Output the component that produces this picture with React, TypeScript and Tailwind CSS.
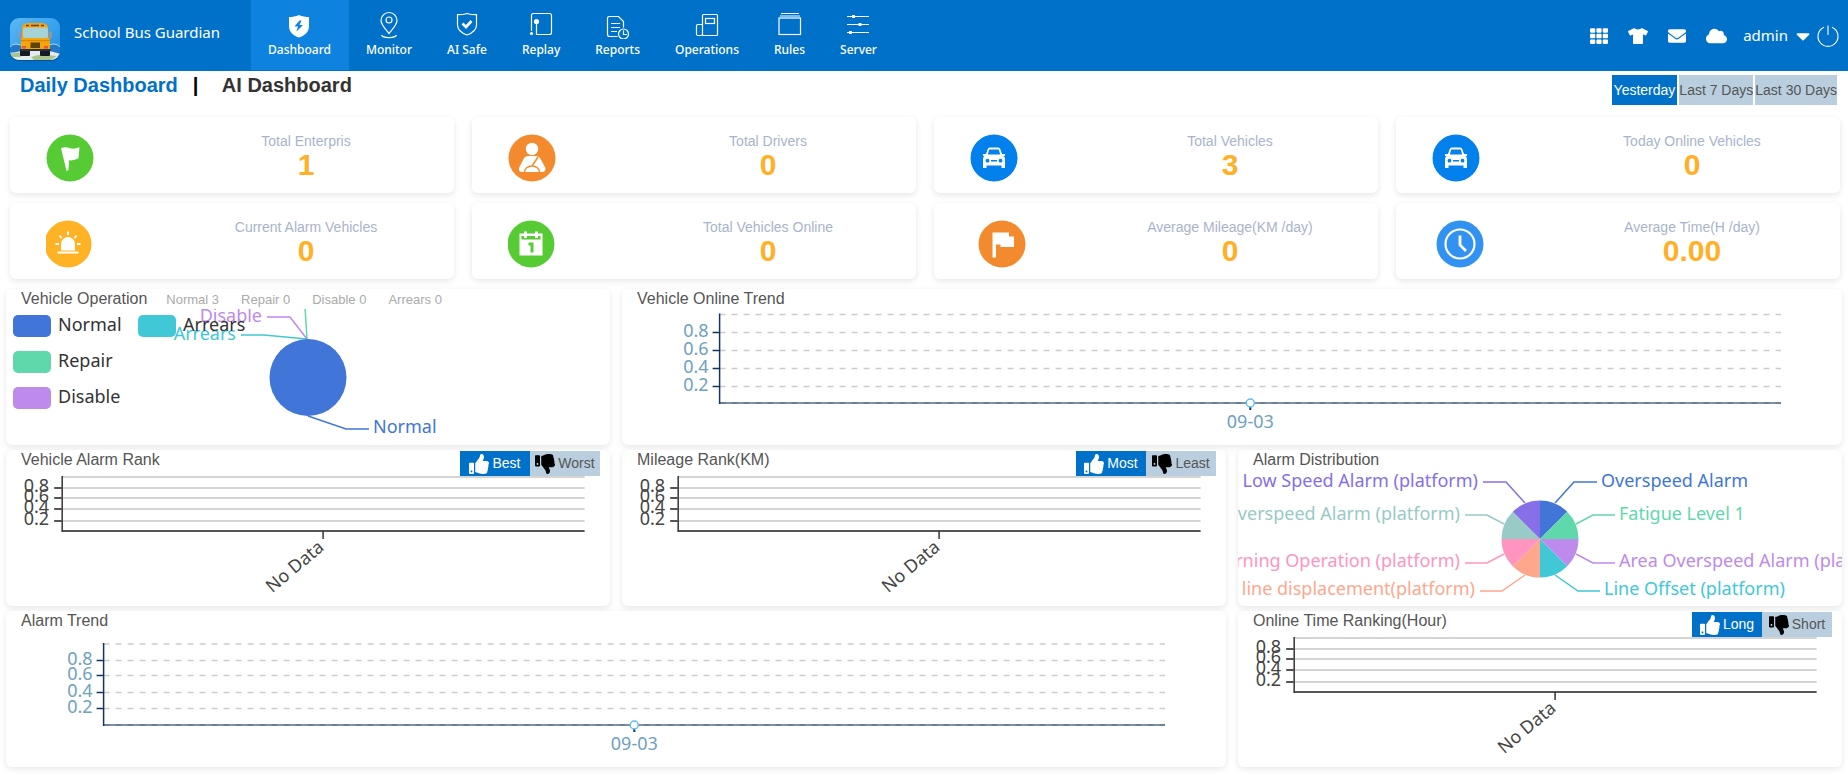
import { useState } from 'react';
import type { ReactNode } from 'react';
import { FaCaretDown, FaCloud, FaEnvelope, FaTh, FaThumbsDown, FaThumbsUp, FaTshirt } from 'react-icons/fa';

const COLORS = ['#4176d8', '#5fd8ac', '#be8aeb', '#40c8d7', '#ffa78d', '#ff94c1', '#98cac6', '#866fe8'];

const CHART_FONT = "font-['Noto_Sans','Noto_Sans_CJK_SC',sans-serif] text-[18px]";

/* ---------- Nav ---------- */

const NAV_ITEMS: { label: string; icon: ReactNode }[] = [
  {
    label: 'Dashboard',
    icon: (
      <>
        <path d="M14 4c3 1.600 7 2 10 2v9c0 6-4 9.500-10 11.500C8 24.500 4 21 4 15V6c3 0 7-.4 10-2z" fill="#fff" stroke="none" />
        <path d="M14.500 9.500l-5 6h3.500l-1.500 5 6.500-6.500h-3.500l2-4.500z" fill="#0d82df" stroke="none" />
      </>
    ),
  },
  {
    label: 'Monitor',
    icon: (
      <>
        <path d="M14 22.500C9.500 17 6 13.500 6 9.500a8 8 0 0 1 16 0c0 4-3.500 7.500-8 13z" />
        <circle cx="14" cy="9" r="3" />
        <path d="M6.500 24c1 3.400 14 3.400 15 0" />
      </>
    ),
  },
  {
    label: 'AI Safe',
    icon: (
      <>
        <path d="M14 2.500c3 1 6.500 1.200 9.500 1.200V14c0 5-4 8-9.500 10C8.500 22 4.500 19 4.500 14V3.700c3 0 6.500-.2 9.500-1.200z" />
        <path d="M9.500 12.500l3.500 3.500 5.500-6" strokeWidth="2.600" />
      </>
    ),
  },
  {
    label: 'Replay',
    icon: (
      <>
        <path d="M4.500 20V4.500q0-2 2-2h16q2 0 2 2v17q0 2-2 2h-13V11" />
        <circle cx="9.500" cy="10.500" r="2.600" fill="#fff" stroke="none" />
        <circle cx="4.500" cy="22.500" r="1.600" fill="#fff" stroke="none" />
      </>
    ),
  },
  {
    label: 'Reports',
    icon: (
      <>
        <path d="M13.500 25.500h-8q-2 0-2-2v-16q0-2 2-2h9l5 5v6" />
        <path d="M7 12.500h9M7 16.500h9M7 20.500h6" />
        <circle cx="19.500" cy="23" r="5" />
        <path d="M19.500 19.500V23.500H23" />
      </>
    ),
  },
  {
    label: 'Operations',
    icon: (
      <>
        <rect x="9.500" y="3.500" width="15" height="21" rx="1" />
        <path d="M9.500 13.500H5q-1.500 0-1.500 1.500v8q0 1.500 1.500 1.500H8q1.500 0 1.500-1.500" />
        <rect x="12.500" y="7.500" width="9" height="5" />
      </>
    ),
  },
  {
    label: 'Rules',
    icon: (
      <>
        <path d="M5 2.500h18M4 5h20" />
        <rect x="3" y="7" width="21.500" height="16.500" />
      </>
    ),
  },
  {
    label: 'Server',
    icon: (
      <>
        <path d="M3 5.500h22M3 13.500h22M3 21.500h22" />
        <path d="M8 5.500h3M14.500 13.500h3M5 21.500h3" strokeWidth="3" />
      </>
    ),
  },
];

function BusLogo() {
  return (
    <svg className="h-[44px] w-[52px] shrink-0" viewBox="0 0 52 44">
      <defs>
        <linearGradient id="sky" x1="0" y1="0" x2="1" y2="1">
          <stop offset="0" stopColor="#5db8f2" />
          <stop offset="0.5" stopColor="#3aa3ee" />
          <stop offset="1" stopColor="#1f86dc" />
        </linearGradient>
        <clipPath id="tile">
          <rect x="1" y="0" width="50" height="42" rx="9" />
        </clipPath>
      </defs>
      <rect x="1" y="1" width="50" height="42" rx="9" fill="#0a4f8f" />
      <g clipPath="url(#tile)">
        <rect width="52" height="44" fill="url(#sky)" />
        <path d="M0 30q3-4 7-4t8 3v6H0zM37 29q4-3 8-3t7 4v6H37z" fill="#2377c6" stroke="#a9d6f7" />
        <ellipse cx="26" cy="41" rx="30" ry="9" fill="#e3ecef" />
        <path d="M2 36q8-3 14 0l-5 3H1zM22 39q8-3 16-2l10 1-8 5H26z" fill="#a9c48c" />
      </g>
      <rect x="10" y="13" width="4" height="8" rx="2" fill="#8c98a3" />
      <rect x="39" y="13" width="4" height="8" rx="2" fill="#8c98a3" />
      <rect x="11" y="31" width="10" height="7" rx="1" fill="#151b26" />
      <rect x="31" y="31" width="10" height="7" rx="1" fill="#151b26" />
      <path d="M13 10q0-4 5-5h16q5 1 5 5v9l2 3v9H12v-9l1-3z" fill="#f5a50c" />
      <path d="M17 7.500h3M22 7.500h8M32 7.500h3" stroke="#7b3a10" strokeWidth="1.500" />
      <rect x="14" y="9.500" width="25" height="10.500" rx="2" fill="#a5d3d6" />
      <path d="M12 22h29v1.200H12z" fill="#d98503" />
      <rect x="21.500" y="24.500" width="9.500" height="5.500" fill="#5c4308" />
      <rect x="13" y="28" width="4" height="2.500" fill="#e9572b" />
      <rect x="35" y="28" width="4" height="2.500" fill="#e9572b" />
      <rect x="11" y="31" width="31" height="2" rx="1" fill="#2c3240" />
    </svg>
  );
}

function Header() {
  return (
    <header className="flex h-[71px] items-start bg-[#0071c9] pr-2 pl-[9px] font-['Noto_Sans','Open_Sans',sans-serif] text-white">
      <div className="flex w-[242px] shrink-0 items-start pt-[18px]">
        <BusLogo />
        <span className="pl-[13px] text-[15px] leading-7 whitespace-nowrap">School Bus Guardian</span>
      </div>

      <nav className="flex">
        {NAV_ITEMS.map((item, i) => (
          <a
            key={item.label}
            href="#"
            className={`flex h-[70px] flex-col items-center pt-[11px] pr-[18px] pl-[17px] ${i === 0 ? 'bg-[#0d82df]' : ''}`}
          >
            <svg
              className="h-7 w-7"
              viewBox="0 0 28 28"
              fill="none"
              stroke="#fff"
              strokeWidth="1.200"
            >
              {item.icon}
            </svg>
            <span className="text-[12px] leading-[22px] font-medium whitespace-nowrap">{item.label}</span>
          </a>
        ))}
      </nav>

      <div className="ml-auto flex h-[71px] items-center">
        <div className="flex items-center gap-5">
          <button aria-label="Apps"><FaTh className="h-5 w-[18px]" /></button>
          <button aria-label="Theme"><FaTshirt className="h-5 w-5" /></button>
          <button aria-label="Messages"><FaEnvelope className="h-[18px] w-[18px]" /></button>
          <button aria-label="Cloud"><FaCloud className="h-5 w-[21px]" /></button>
        </div>
        <button className="ml-4 flex items-center gap-[6px] text-[15px]">
          admin
          <FaCaretDown className="h-[22px] w-[18px]" />
        </button>
        <button aria-label="Log out" className="ml-1">
          <svg className="h-6 w-6" viewBox="0 0 24 24" fill="none" stroke="#fff" strokeWidth="1.100">
            <path d="M8 3.200a10 10 0 1 0 8 0M12 1.500v9.500" />
          </svg>
        </button>
      </div>
    </header>
  );
}

/* ---------- Stat cards ---------- */

const CAR = (
  <path
    fill="#fff"
    fillRule="evenodd"
    d="M-6.500-8.500q.5-2 2.500-2h8q2 0 2.500 2l1.500 4.500h3v2H9.500q1.500 1 1.500 3V10H7.500V7.500h-15V10H-11V1q0-2 1.500-3h-1.500v-2h3zM-4.700-8.500L-6.200-3.500H6.200L4.700-8.500zM-6.500.800a1.900 1.900 0 1 0 0 3.800 1.900 1.900 0 0 0 0-3.800zM6.500.800a1.900 1.900 0 1 0 0 3.800 1.900 1.900 0 0 0 0-3.800zM-3 2v1.500h6V2z"
  />
);

interface Stat {
  label: string;
  value: string;
  color: string;
  cx: number;
  glyph: ReactNode;
}

const STATS: Stat[] = [
  {
    label: 'Total Enterpris',
    value: '1',
    color: '#57cb33',
    cx: 24,
    glyph: <path fill="#fff" d="M-9-10q5-1.500 9 .3 4 1.300 9.500-1l-1 11q-4 2.500-9.500 2L-1.500 12-3.500 13z" />,
  },
  {
    label: 'Total Drivers',
    value: '0',
    color: '#f38b2e',
    cx: 24,
    glyph: (
      <>
        <circle cy="-9" r="6.200" fill="#fff" />
        <path d="M-8 0q2-2 4-2h8q2 0 4 2l5.500 10q0 4-3 4H-10q-3.500 0-3-4z" fill="#fff" />
        <path d="M-7.500 14a7.500 6 0 0 1 15 0M0 8l6-9" fill="none" stroke="#f38b2e" strokeWidth="1.500" />
      </>
    ),
  },
  { label: 'Total Vehicles', value: '3', color: '#0280ec', cx: 24, glyph: CAR },
  { label: 'Today Online Vehicles', value: '0', color: '#0280ec', cx: 24, glyph: CAR },
  {
    label: 'Current Alarm Vehicles',
    value: '0',
    color: '#ffb224',
    cx: 22,
    glyph: (
      <>
        <path d="M-7 6.500V0a7 7 0 0 1 14 0v6.500z" fill="#fff" />
        <path d="M-10.500 8.500h21M0-12.500v3.500M-8.500-8.500l2 2.500M8.500-8.500l-2 2.500M-12.500 0h3.500M12.500 0H9" stroke="#fff" strokeWidth="2" />
      </>
    ),
  },
  {
    label: 'Total Vehicles Online',
    value: '0',
    color: '#57cb33',
    cx: 23,
    glyph: (
      <>
        <path
          fill="#fff"
          fillRule="evenodd"
          d="M-11.500-10.500h4.500v-2h3v2h8v-2h3v2h4.500v22h-23zM-9.500-8v3.500h19V-8h-2.500v2H4v-2h-8v2h-3v-2z"
        />
        <path d="M-2.500 0H1v8.500" fill="none" stroke="#57cb33" strokeWidth="3" />
      </>
    ),
  },
  {
    label: 'Average Mileage(KM /day)',
    value: '0',
    color: '#f38b2e',
    cx: 32,
    glyph: <path fill="#fff" d="M-9.500-11.500H7v4h5V3H-1.500V.500h-4.500v13h-3.500z" />,
  },
  {
    label: 'Average Time(H /day)',
    value: '0.00',
    color: '#3192f2',
    cx: 28,
    glyph: (
      <g fill="none" stroke="#fff">
        <circle r="14.500" strokeWidth="2.200" />
        <path d="M0-8.500V1l6 6" strokeWidth="2.800" />
      </g>
    ),
  },
];

function StatCard({ stat }: { stat: Stat }) {
  return (
    <div className="grid h-[76px] grid-cols-3 items-center rounded-md bg-white shadow-[0_2px_6px_rgba(0,0,0,0.1)]">
      <div className="pt-[6px] pl-9">
        <svg className="h-12 w-16" viewBox="0 0 64 48">
          <g transform={`translate(${stat.cx} 24)`}>
            <circle r="23.500" fill={stat.color} />
            {stat.glyph}
          </g>
        </svg>
      </div>
      <div className="col-span-2 text-center">
        <div className="text-[14px] leading-5 text-[#a9b4cb]">{stat.label}</div>
        <div className="text-[30px] leading-7 font-bold text-[#ffb027]">{stat.value}</div>
      </div>
    </div>
  );
}

/* ---------- Panels ---------- */

interface PanelProps {
  title: string;
  wide?: boolean;
  extra?: ReactNode;
  children: ReactNode;
}

function Panel({ title, wide, extra, children }: PanelProps) {
  return (
    <section
      className={`flex h-[156px] min-w-0 flex-col rounded-md bg-white shadow-[0_2px_6px_rgba(0,0,0,0.1)] ${wide ? 'col-span-2' : ''}`}
    >
      <div className="flex h-5 shrink-0 items-start pr-[10px] pl-[15px]">
        <h2 className="text-[16px] leading-5 whitespace-nowrap text-[#555]">{title}</h2>
        {extra}
      </div>
      {children}
    </section>
  );
}

function RankToggle({ up, down }: { up: string; down: string }) {
  const [active, setActive] = useState(up);
  const tone = (name: string) => (active === name ? 'bg-[#0071c9] text-white' : 'bg-[#b9cfdf] text-[#555]');
  const iconTone = (name: string) => (active === name ? 'text-white' : 'text-black');

  return (
    <div className="relative z-10 mt-px ml-auto flex text-[14px]">
      <button
        onClick={() => setActive(up)}
        className={`flex h-[25px] w-[70px] items-center justify-center gap-[3px] ${tone(up)}`}
      >
        <FaThumbsUp className={`h-5 w-5 ${iconTone(up)}`} />
        {up}
      </button>
      <button
        onClick={() => setActive(down)}
        className={`flex h-[25px] w-[70px] items-center justify-center gap-[3px] ${tone(down)}`}
      >
        <FaThumbsDown className={`h-5 w-5 ${iconTone(down)}`} />
        {down}
      </button>
    </div>
  );
}

const TICK_LABELS = ['', '0.8', '0.6', '0.4', '0.2'];

function TrendChart({ rows, date }: { rows: number[]; date: string }) {
  const base = rows[rows.length - 1];
  return (
    <svg className={`h-[136px] w-full ${CHART_FONT}`}>
      {rows.map((y) => (
        <line key={y} x1="8%" x2="95%" y1={y} y2={y} stroke="#ccc" strokeWidth="1.500" strokeDasharray="6 6" />
      ))}
      <line x1="8%" x2="95%" y1={base} y2={base} stroke="#1d3c63" strokeOpacity="0.75" strokeWidth="1.500" />
      <svg x="8%" overflow="visible">
        <line x1="0" x2="0" y1={rows[0] - 1} y2={base + 1} stroke="#12355f" strokeWidth="1.500" />
        {TICK_LABELS.map((label, i) =>
          label ? (
            <g key={label}>
              <line x1="-7" x2="0" y1={rows[i]} y2={rows[i]} stroke="#12355f" strokeWidth="1.500" />
              <text x="-11" y={rows[i] + 4} textAnchor="end" fill="#6ea1be">{label}</text>
            </g>
          ) : null
        )}
      </svg>
      <svg x="51.500%" overflow="visible">
        <line x1="0" x2="0" y1={base} y2={base + 7} stroke="#12355f" strokeWidth="2" />
        <circle cy={base} r="4" fill="#fff" stroke="#62bdf0" strokeWidth="1.500" />
        <text y={base + 25} textAnchor="middle" fill="#6ea1be">{date}</text>
      </svg>
    </svg>
  );
}

const RANK_ROWS = [7, 18, 28, 39, 51, 61];

function RankChart() {
  return (
    <svg className={`h-[136px] w-full ${CHART_FONT}`}>
      {RANK_ROWS.slice(0, 5).map((y) => (
        <line key={y} x1="9.300%" x2="95.800%" y1={y} y2={y} stroke="#d4d4d4" strokeWidth="2" />
      ))}
      <line x1="9.300%" x2="95.800%" y1="61" y2="61" stroke="#555" strokeWidth="2" />
      <svg x="9.300%" overflow="visible">
        <line x1="0" x2="0" y1="6" y2="62" stroke="#333" strokeWidth="1.500" />
        {TICK_LABELS.map((label, i) =>
          label ? (
            <g key={label}>
              <line x1="-8" x2="0" y1={RANK_ROWS[i]} y2={RANK_ROWS[i]} stroke="#555" strokeWidth="2" />
              <text x="-13" y={RANK_ROWS[i] + 4} textAnchor="end" fill="#444">{label}</text>
            </g>
          ) : null
        )}
      </svg>
      <svg x="52.500%" overflow="visible">
        <line x1="0" x2="0" y1="61" y2="69" stroke="#333" strokeWidth="1.500" />
        <text transform="translate(2 79) rotate(-40)" textAnchor="end" fill="#444">No Data</text>
      </svg>
    </svg>
  );
}

const LEGEND = [
  { name: 'Normal', x: 7, y: 17, color: COLORS[0] },
  { name: 'Repair', x: 7, y: 53, color: COLORS[1] },
  { name: 'Disable', x: 7, y: 89, color: COLORS[2] },
  { name: 'Arrears', x: 132, y: 17, color: COLORS[3] },
];

function OperationPie() {
  return (
    <svg className={`h-[136px] w-full ${CHART_FONT}`}>
      {/* slices with no vehicles still get their leader lines */}
      <svg x="50%" overflow="visible">
        <g fill="none" strokeWidth="1.500">
          <path d="M-1 30L-3-2" stroke={COLORS[1]} />
          <path d="M-1 30L-18 8H-41" stroke={COLORS[2]} />
          <path d="M-1 30L-44 26H-67" stroke={COLORS[3]} />
          <path d="M0 107L38 120H61" stroke={COLORS[0]} />
        </g>
        <circle cy="68.500" r="38.500" fill={COLORS[0]} />
        <text x="-46" y="13" textAnchor="end" fill={COLORS[2]}>Disable</text>
        <text x="-72" y="31" textAnchor="end" fill={COLORS[3]}>Arrears</text>
        <text x="65" y="124" fill={COLORS[0]}>Normal</text>
      </svg>
      {LEGEND.map((item) => (
        <g key={item.name}>
          <rect x={item.x} y={item.y - 11} width="38" height="22" rx="5" fill={item.color} />
          <text x={item.x + 45} y={item.y + 5} fill="#333">{item.name}</text>
        </g>
      ))}
    </svg>
  );
}

// label anchors and leader lines, measured from the centre of the pie
const ALARM_TYPES = [
  { name: 'Overspeed Alarm', line: 'M15-36L34-57H57', x: 61, y: -52 },
  { name: 'Fatigue Level 1', line: 'M36-15L53-24H75', x: 79, y: -19 },
  { name: 'Area Overspeed Alarm (platform)', line: 'M36 15L53 24H75', x: 79, y: 28 },
  { name: 'Line Offset (platform)', line: 'M15 36L38 52H60', x: 64, y: 56 },
  { name: 'Off line displacement(platform)', line: 'M-15 36L-38 52H-60', x: -65, y: 56 },
  { name: 'Warning Operation (platform)', line: 'M-36 15L-53 24H-75', x: -80, y: 28 },
  { name: 'Overspeed Alarm (platform)', line: 'M-36-15L-53-24H-75', x: -80, y: -19 },
  { name: 'Low Speed Alarm (platform)', line: 'M-15-36L-34-57H-57', x: -62, y: -52 },
];

function AlarmPie() {
  const r = 38.5;
  const point = (i: number) => {
    const angle = (i * Math.PI) / 4;
    return `${(r * Math.sin(angle)).toFixed(2)} ${(-r * Math.cos(angle)).toFixed(2)}`;
  };

  return (
    <svg className={`h-[136px] w-full ${CHART_FONT}`}>
      <svg x="50%" overflow="visible">
        <g transform="translate(0 69)">
          {ALARM_TYPES.map((alarm, i) => (
            <g key={alarm.name}>
              <path d={`M0 0L${point(i)}A${r} ${r} 0 0 1 ${point(i + 1)}z`} fill={COLORS[i]} />
              <path d={alarm.line} fill="none" stroke={COLORS[i]} strokeWidth="1.500" />
              <text x={alarm.x} y={alarm.y} textAnchor={alarm.x < 0 ? 'end' : 'start'} fill={COLORS[i]}>
                {alarm.name}
              </text>
            </g>
          ))}
        </g>
      </svg>
    </svg>
  );
}

const RANGES = ['Yesterday', 'Last 7 Days', 'Last 30 Days'];
const OPERATION_COUNTS = ['Normal 3', 'Repair 0', 'Disable 0', 'Arrears 0'];

export default function App() {
  const [range, setRange] = useState('Yesterday');

  return (
    <div className="min-h-screen bg-white font-['Liberation_Sans',Arial,sans-serif]">
      <Header />

      {/* Tabs and date range */}
      <div className="flex h-[46px] items-start justify-between pr-[11px] pl-5">
        <div className="flex text-[20px] leading-7 font-bold">
          <a href="#" className="text-[#0071c9]">Daily Dashboard</a>
          <span className="w-11 pl-[15px] text-black">|</span>
          <a href="#" className="text-[#333]">AI Dashboard</a>
        </div>
        <div className="flex gap-[2px] pt-1 text-[14px]">
          {RANGES.map((name) => (
            <button
              key={name}
              onClick={() => setRange(name)}
              className={`h-[30px] whitespace-nowrap ${range === name ? 'bg-[#0071c9] px-[2px] text-white' : 'bg-[#b9cfdf] text-[#555]'}`}
            >
              {name}
            </button>
          ))}
        </div>
      </div>

      {/* Stats */}
      <div className="grid grid-cols-4 gap-x-[18px] gap-y-[10px] pr-2 pl-[10px]">
        {STATS.map((stat) => (
          <StatCard key={stat.label} stat={stat} />
        ))}
      </div>

      {/* Charts */}
      <div className="mt-[10px] grid grid-cols-3 gap-x-3 gap-y-[5px] px-[6px] pb-[10px]">
        <Panel
          title="Vehicle Operation"
          extra={
            <ul className="flex gap-[22px] pl-[19px] text-[13px] leading-[22px] whitespace-nowrap text-[#aaa]">
              {OPERATION_COUNTS.map((text) => (
                <li key={text}>{text}</li>
              ))}
            </ul>
          }
        >
          <OperationPie />
        </Panel>
        <Panel title="Vehicle Online Trend" wide>
          <TrendChart rows={[5.5, 23.5, 41.5, 59.5, 77.5, 94]} date="09-03" />
        </Panel>
        <Panel title="Vehicle Alarm Rank" extra={<RankToggle up="Best" down="Worst" />}>
          <RankChart />
        </Panel>
        <Panel title="Mileage Rank(KM)" extra={<RankToggle up="Most" down="Least" />}>
          <RankChart />
        </Panel>
        <Panel title="Alarm Distribution">
          <AlarmPie />
        </Panel>
        <Panel title="Alarm Trend" wide>
          <TrendChart rows={[13, 29.5, 44.5, 61.5, 77.5, 94]} date="09-03" />
        </Panel>
        <Panel title="Online Time Ranking(Hour)" extra={<RankToggle up="Long" down="Short" />}>
          <RankChart />
        </Panel>
      </div>
    </div>
  );
}
